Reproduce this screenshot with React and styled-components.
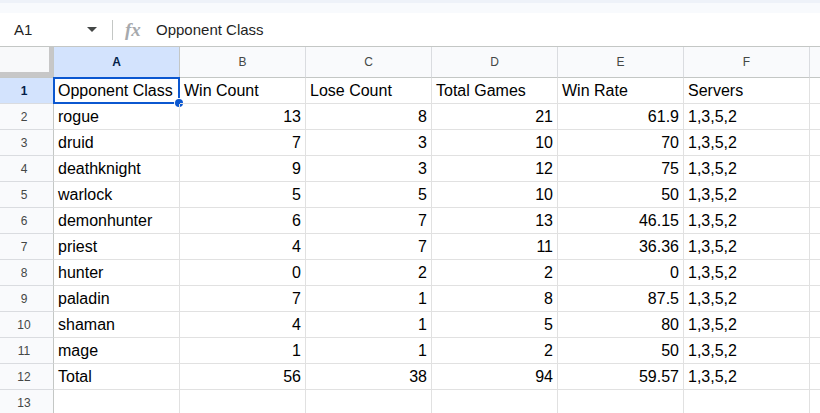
import React from "react";
import styled, { createGlobalStyle } from "styled-components";

const GlobalStyle = createGlobalStyle`
  html, body { margin: 0; padding: 0; background: #fff; overflow: hidden; }
  body { font-family: "Liberation Sans", Arial, sans-serif; }
`;

const Page = styled.div`
  width: 820px;
  height: 413px;
  overflow: hidden;
  display: flex;
  flex-direction: column;
`;

const TopBand = styled.div`
  height: 13px;
  flex: none;
  background: linear-gradient(#eef2f9 0 3px, #f8fafd 3px 100%);
`;

const FormulaBar = styled.div`
  height: 33px;
  flex: none;
  display: flex;
  align-items: center;
  background: #fff;
`;

const NameBox = styled.div`
  width: 112px;
  display: flex;
  align-items: center;
  justify-content: space-between;
  padding: 0 15px 0 14px;
  box-sizing: border-box;
  font-size: 15px;
  color: #1f1f1f;
`;

const Separator = styled.div`
  width: 1px;
  height: 20px;
  background: #c4c7c5;
`;

const FxIcon = styled.span`
  margin-left: 12px;
  width: 31px;
  font-family: "Liberation Serif", "DejaVu Serif", serif;
  font-style: italic;
  font-weight: 700;
  font-size: 19px;
  color: #a6a9ad;
  letter-spacing: 0px;
`;

const FormulaText = styled.div`
  font-size: 15px;
  color: #1f1f1f;
`;

const Grid = styled.div`
  display: grid;
  grid-template-columns: 54px repeat(7, 126px);
  grid-template-rows: 31px;
  grid-auto-rows: 26px;
  border-top: 1px solid #c4c7c5;
`;

const Corner = styled.div`
  box-sizing: border-box;
  background: #f8f9fa;
  border-right: 1px solid #c4c7c5;
  border-bottom: 1px solid #c4c7c5;
  box-shadow: inset -4px -5px 0 #c7c7c7;
`;

const ColHeader = styled.div`
  box-sizing: border-box;
  display: flex;
  align-items: center;
  justify-content: center;
  font-size: 12px;
  background: ${(p) => (p.$active ? "#d3e3fd" : "#f9fafc")};
  color: ${(p) => (p.$active ? "#041e49" : "#444746")};
  font-weight: ${(p) => (p.$active ? 700 : 400)};
  border-right: 1px solid ${(p) => (p.$active ? "#c4c7c5" : "#dadce0")};
  border-bottom: 1px solid #c4c7c5;
`;

const RowHeader = styled.div`
  box-sizing: border-box;
  display: flex;
  align-items: center;
  justify-content: center;
  padding-right: 5px;
  font-size: 12px;
  background: ${(p) => (p.$active ? "#d3e3fd" : "#f9fafc")};
  color: ${(p) => (p.$active ? "#041e49" : "#444746")};
  font-weight: ${(p) => (p.$active ? 700 : 400)};
  border-right: 1px solid #c4c7c5;
  border-bottom: 1px solid #dadce0;
`;

const Cell = styled.div`
  position: relative;
  box-sizing: border-box;
  display: flex;
  align-items: center;
  justify-content: ${(p) => (p.$num ? "flex-end" : "flex-start")};
  padding: 1px 4px 0 4px;
  font-size: 16px;
  color: #000;
  white-space: nowrap;
  border-right: 1px solid #e1e1e1;
  border-bottom: 1px solid #e1e1e1;
`;

const Selection = styled.div`
  position: absolute;
  left: -1px;
  top: -1px;
  width: 127px;
  height: 27px;
  box-sizing: border-box;
  border: 2px solid #0b57d0;
  pointer-events: none;
`;

const FillHandle = styled.div`
  position: absolute;
  right: -5px;
  bottom: -5px;
  width: 8px;
  height: 8px;
  border-radius: 50%;
  background: #0b57d0;
  box-shadow: 0 0 0 1px #fff;
`;

const Caret = () => (
  <svg width="10" height="6" viewBox="0 0 10 6">
    <path d="M0 0 L10 0 L5 5 Z" fill="#444746" />
  </svg>
);

const columns = ["A", "B", "C", "D", "E", "F", ""];

const rows = [
  ["Opponent Class", "Win Count", "Lose Count", "Total Games", "Win Rate", "Servers"],
  ["rogue", 13, 8, 21, 61.9, "1,3,5,2"],
  ["druid", 7, 3, 10, 70, "1,3,5,2"],
  ["deathknight", 9, 3, 12, 75, "1,3,5,2"],
  ["warlock", 5, 5, 10, 50, "1,3,5,2"],
  ["demonhunter", 6, 7, 13, 46.15, "1,3,5,2"],
  ["priest", 4, 7, 11, 36.36, "1,3,5,2"],
  ["hunter", 0, 2, 2, 0, "1,3,5,2"],
  ["paladin", 7, 1, 8, 87.5, "1,3,5,2"],
  ["shaman", 4, 1, 5, 80, "1,3,5,2"],
  ["mage", 1, 1, 2, 50, "1,3,5,2"],
  ["Total", 56, 38, 94, 59.57, "1,3,5,2"],
  ["", "", "", "", "", ""],
];

export default function App() {
  return (
    <Page>
      <GlobalStyle />
      <TopBand />
      <FormulaBar>
        <NameBox>
          <span>A1</span>
          <Caret />
        </NameBox>
        <Separator />
        <FxIcon>fx</FxIcon>
        <FormulaText>Opponent Class</FormulaText>
      </FormulaBar>
      <Grid>
        <Corner />
        {columns.map((c, i) => (
          <ColHeader key={i} $active={c === "A"}>
            {c}
          </ColHeader>
        ))}
        {rows.map((row, r) => (
          <React.Fragment key={r}>
            <RowHeader $active={r === 0}>{r + 1}</RowHeader>
            {row.map((v, c) => (
              <Cell key={c} $num={typeof v === "number"}>
                {v}
                {r === 0 && c === 0 && (
                  <Selection>
                    <FillHandle />
                  </Selection>
                )}
              </Cell>
            ))}
            <Cell />
          </React.Fragment>
        ))}
      </Grid>
    </Page>
  );
}
